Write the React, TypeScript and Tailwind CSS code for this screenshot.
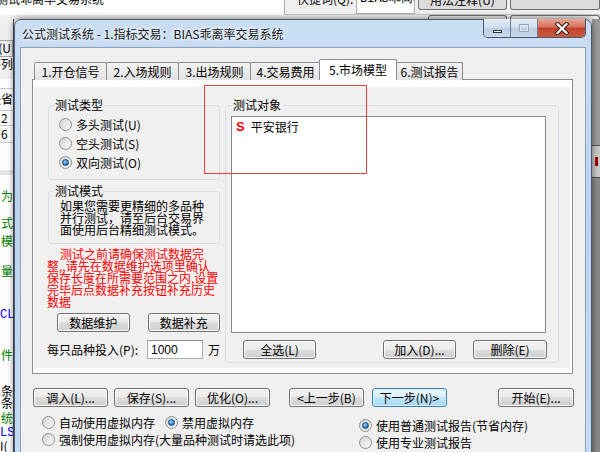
import clsx from 'clsx';

const Btn = ({ label, className, primary }: { label: string; className?: string; primary?: boolean }) => (
  <div
    className={clsx(
      'flex h-[19px] items-center justify-center rounded-[3px] border text-[12px] leading-none text-black whitespace-nowrap',
      primary
        ? 'border-[#3c7fb1] bg-[linear-gradient(#eaf6fd_0%,#d9f0fc_50%,#bee6fd_50%,#a7d9f5_100%)] shadow-[inset_0_0_0_1px_#d8eefc]'
        : 'border-[#707070] bg-[linear-gradient(#f2f2f2_0%,#ebebeb_50%,#dddddd_50%,#cfcfcf_100%)] shadow-[inset_0_0_0_1px_#fcfcfc]',
      className
    )}
  >
    {label}
  </div>
);

const Radio = ({ label, checked, className }: { label: string; checked?: boolean; className?: string }) => (
  <div className={clsx('flex h-[17px] items-center gap-[4px] text-[12px] whitespace-nowrap', className)}>
    <span className="flex h-[13px] w-[13px] shrink-0 items-center justify-center rounded-full border border-[#8e8f8f] bg-[linear-gradient(135deg,#d6d6d6,#f8f8f8)]">
      {checked && (
        <span className="h-[7px] w-[7px] rounded-full border border-[#1c4c7c] bg-[radial-gradient(circle_at_40%_35%,#9fdcff,#2a79c4_60%,#1b4f86)]" />
      )}
    </span>
    <span>{label}</span>
  </div>
);

const Tab = ({ label, className, active }: { label: string; className: string; active?: boolean }) => (
  <div
    className={clsx(
      'flex items-center justify-center rounded-t-[2px] border border-b-0 border-[#898c95] text-[12px] whitespace-nowrap',
      active ? 'relative z-10 h-[21px] bg-white' : 'h-[18px] bg-[linear-gradient(#f3f3f3,#e2e2e2)]',
      className
    )}
  >
    {label}
  </div>
);

const LeftStrip = () => (
  <div className="flex w-[14px] flex-col overflow-hidden text-[12px] leading-[12px] border-r border-[#555]">
    <div className="h-[21px] bg-[#f0f0f0]" />
    <div className="flex h-[17px] items-center justify-end border border-l-0 border-[#a0a0a0] bg-[#ececec] pr-[1px]">(U</div>
    <div className="flex h-[15px] items-center justify-end bg-[#f7f7f7] whitespace-nowrap">序列</div>
    <div className="h-[8px] bg-[#f0f0f0]" />
    <div className="h-[10px] border-b border-[#c8c8c8] bg-white" />
    <div className="flex h-[22px] items-center justify-end border-b border-[#c8c8c8] bg-white whitespace-nowrap">缺省</div>
    <div className="flex h-[15px] items-center justify-start border-b border-[#c8c8c8] bg-white pl-[1px]">2</div>
    <div className="flex h-[18px] items-center justify-start border-b border-[#c8c8c8] bg-white pl-[1px]">6</div>
    <div className="h-[27px] bg-white" />
    <div className="h-[5px] bg-[#e4e4e4]" />
    <div className="flex-1 bg-white">
      <div className="mt-[15px] flex h-[12px] justify-end text-[#008000]">为</div>
      <div className="mt-[15px] flex h-[12px] justify-end text-[#008000]">式</div>
      <div className="mt-[6px] flex h-[12px] justify-end text-[#008000]">模</div>
      <div className="mt-[18px] flex h-[12px] justify-end text-[#008000]">量</div>
      <div className="mt-[32px] flex h-[12px] justify-start font-['Liberation_Mono'] text-[#0000ff]">CL</div>
      <div className="mt-[28px] flex h-[12px] justify-end text-[#008000]">件</div>
      <div className="mt-[24px] flex h-[12px] justify-end">条</div>
      <div className="flex h-[12px] justify-end">条</div>
      <div className="mt-[3px] flex h-[12px] justify-end text-[#008000]">统</div>
      <div className="mt-[3px] flex h-[12px] justify-start font-['Liberation_Mono'] text-[#0000ff]">LS</div>
      <div className="mt-[1px] flex h-[12px] justify-start">I(</div>
    </div>
  </div>
);

const CaptionButtons = () => (
  <div className="-mt-[1px] mr-[5px] flex h-[19px] overflow-hidden rounded-b-[5px] border border-t-0 border-[#48596f]">
    <div className="flex w-[27px] items-end justify-center border-r border-[#6c7e96] bg-[linear-gradient(#e6eef8,#cfdcec_50%,#bccde3_50%,#c9d9ec)] pb-[4px]">
      <span className="h-[3px] w-[9px] border border-[#333] bg-white" />
    </div>
    <div className="flex w-[27px] items-center justify-center border-r border-[#6c7e96] bg-[linear-gradient(#e6eef8,#cfdcec_50%,#bccde3_50%,#c9d9ec)]">
      <span className="h-[8px] w-[10px] border border-[#9aa8ba] shadow-[inset_0_0_0_1px_#dfe6ef]" />
    </div>
    <div className="flex w-[47px] items-center justify-center bg-[linear-gradient(#e9a593,#d4705a_45%,#c0412b_50%,#cd5a40)]">
      <svg width="16" height="13" viewBox="0 0 16 13">
        <path d="M3.5 2 L12.5 11 M12.5 2 L3.5 11" stroke="#3a1c18" strokeWidth="4.2" strokeLinecap="square" />
        <path d="M3.5 2 L12.5 11 M12.5 2 L3.5 11" stroke="#fff" strokeWidth="2.2" strokeLinecap="square" />
      </svg>
    </div>
  </div>
);

const App = () => {
  return (
    <div className="relative h-[452px] w-[600px] overflow-hidden bg-[#f0f0f0] font-['Noto_Sans_CJK_SC',sans-serif] text-black">
      {/* background application */}
      <div className="flex h-[19px] flex-col">
        <div className="flex h-[15px] border-b border-[#c8c8c8] text-[12px]">
          <div className="h-[15px] w-[285px] overflow-hidden border-r border-[#abadb3] bg-white">
            <div className="-ml-[4px] -mt-[10px] whitespace-nowrap">测试乖离率交易系统</div>
          </div>
          <div className="ml-[12px] h-[9px] w-[58px] overflow-hidden">
            <div className="-mt-[10px] whitespace-nowrap">快捷词(Q):</div>
          </div>
          <div className="ml-[1px] h-[14px] w-[59px] overflow-hidden border border-t-0 border-[#abadb3] bg-white">
            <div className="-mt-[10px] pl-[3px] font-['Liberation_Mono'] whitespace-nowrap">BIAS乖离率</div>
          </div>
          <div className="ml-[3px] h-[10px] w-[89px] overflow-hidden rounded-b-[3px] border border-t-0 border-[#707070] bg-[#dcdcdc]">
            <div className="-mt-[9px] text-center whitespace-nowrap">用法注释(U)</div>
          </div>
          <div className="ml-[3px] h-[10px] flex-1 rounded-b-[3px] border border-t-0 border-[#707070] bg-[#dcdcdc]" />
        </div>
        <div className="flex h-[4px]">
          <div className="ml-[428px] w-[79px] rounded-t-[3px] border border-b-0 border-[#707070] bg-[#e6e6e6]" />
          <div className="ml-[3px] flex-1 rounded-t-[3px] border border-b-0 border-[#707070] bg-[#e6e6e6]" />
        </div>
      </div>
      <div className="flex h-[433px]">
        <LeftStrip />
        <div className="flex-1" />
        <div className="flex w-[8px] flex-col">
          <div className="h-[126px] bg-[#9c9c9c]" />
          <div className="flex h-[33px] items-center border-y border-[#555] bg-[#c9c9c9] pl-[3px]">
            <span className="h-[9px] w-[3px] bg-[#a00000]" />
          </div>
          <div className="flex-1 bg-[#8a8a8a]" />
        </div>
      </div>

      {/* dialog window */}
      <div className="absolute left-[14px] top-[19px] flex h-[440px] w-[578px] flex-col rounded-t-[7px] border border-[#4a5a70] bg-[linear-gradient(180deg,#c9ddf3,#bcd4ee_40%,#c4daf2)] shadow-[0_0_7px_rgba(0,0,0,0.55)]">
        <div className="flex h-[27px] shrink-0">
          <div className="ml-[7px] self-center text-[12px] whitespace-nowrap text-[#151515] [text-shadow:0_0_6px_#fff,0_0_4px_#fff]">
            公式测试系统 - 1.指标交易：BIAS乖离率交易系统
          </div>
          <div className="flex-1" />
          <CaptionButtons />
        </div>

        <div className="mx-[5px] flex-1 border border-[#8aa0bb] bg-[#f0f0f0]">
          {/* tab control */}
          <div className="ml-[11px] mt-[11px] w-[541px]">
            <div className="flex h-[21px] items-end pl-[2px]">
              <Tab label="1.开仓信号" className="w-[73px]" />
              <Tab label="2.入场规则" className="-ml-px w-[73px]" />
              <Tab label="3.出场规则" className="-ml-px w-[73px]" />
              <Tab label="4.交易费用" className="-ml-px w-[71px]" />
              <Tab label="5.市场模型" className="-ml-[2px] w-[78px]" active />
              <Tab label="6.测试报告" className="-ml-px w-[67px]" />
            </div>
            <div className="-mt-px h-[295px] border border-[#898c95] bg-white pl-[1px] pr-[2px] pt-[7px]">
              <div className="flex h-[281px] bg-[#f0f0f0] pl-[13px] pt-[10px] text-[12px]">
                {/* left column */}
                <div className="flex w-[173px] flex-col">
                  <fieldset className="ml-[1px] h-[83px] w-[172px] rounded-[3px] border border-[#d5dfe5]">
                    <legend className="ml-[5px] px-[1px] text-[12px] leading-[16px]">测试类型</legend>
                    <div className="flex flex-col pl-[10px] pt-[2px]">
                      <Radio label="多头测试(U)" className="h-[19px]" />
                      <Radio label="空头测试(S)" className="h-[19px]" />
                      <Radio label="双向测试(O)" className="h-[19px]" checked />
                    </div>
                  </fieldset>
                  <fieldset className="ml-[1px] mt-[3px] h-[61px] w-[172px] rounded-[3px] border border-[#d5dfe5]">
                    <legend className="ml-[5px] px-[1px] text-[12px] leading-[16px]">测试模式</legend>
                    <div className="pl-[11px] pt-[1px] leading-[12px] whitespace-nowrap">
                      <div>如果您需要更精细的多品种</div>
                      <div>并行测试，请至后台交易界</div>
                      <div>面使用后台精细测试模式。</div>
                    </div>
                  </fieldset>
                  <div className="mt-[4px] leading-[12px] whitespace-nowrap text-[#ff0000]">
                    <div className="pl-[13px]">测试之前请确保测试数据完</div>
                    <div>整,,请先在数据维护选项里确认</div>
                    <div>保存长度在所需要范围之内,设置</div>
                    <div>完毕后点数据补充按钮补充历史</div>
                    <div>数据</div>
                  </div>
                  <div className="mt-[5px] flex gap-[18px] pl-[10px]">
                    <Btn label="数据维护" className="w-[73px]" />
                    <Btn label="数据补充" className="w-[73px]" />
                  </div>
                  <div className="mt-[8px] flex h-[19px] items-center">
                    <div className="w-[102px] whitespace-nowrap">每只品种投入(P):</div>
                    <div className="flex h-[19px] w-[57px] items-center border border-[#abadb3] border-t-[#8e8f8f] bg-white pl-[3px] font-['Liberation_Sans'] text-[12px]">
                      1000
                    </div>
                    <div className="ml-[5px]">万</div>
                  </div>
                </div>

                {/* right column */}
                <fieldset className="ml-[5px] h-[266px] w-[334px] rounded-[3px] border border-[#d5dfe5]">
                  <legend className="ml-[6px] px-[1px] text-[12px] leading-[16px]">测试对象</legend>
                  <div className="ml-[5px] mt-[3px] h-[217px] w-[315px] border border-[#828790] bg-white">
                    <div className="flex h-[18px] items-center gap-[6px] pl-[4px] pt-[2px]">
                      <span className="font-['Liberation_Sans'] text-[13px] font-bold text-[#ff0000]">S</span>
                      <span>平安银行</span>
                    </div>
                  </div>
                  <div className="mt-[7px] flex justify-between pl-[17px] pr-[11px]">
                    <Btn label="全选(L)" className="w-[73px]" />
                    <div className="flex gap-[17px]">
                      <Btn label="加入(D)..." className="w-[73px]" />
                      <Btn label="删除(E)" className="w-[74px]" />
                    </div>
                  </div>
                </fieldset>
              </div>
            </div>
          </div>

          {/* bottom buttons */}
          <div className="mt-[14px] flex pl-[12px]">
            <Btn label="调入(L)..." className="w-[75px]" />
            <Btn label="保存(S)..." className="ml-[6px] w-[75px]" />
            <Btn label="优化(O)..." className="ml-[6px] w-[75px]" />
            <Btn label="<上一步(B)" className="ml-[19px] w-[75px]" />
            <Btn label="下一步(N)>" className="ml-[8px] w-[75px]" primary />
            <Btn label="开始(E)..." className="ml-[51px] w-[76px]" />
          </div>

          {/* memory options */}
          <div className="mt-[7px] flex">
            <div className="flex w-[338px] flex-col pl-[21px]">
              <div className="flex">
                <Radio label="自动使用虚拟内存" className="w-[123px]" />
                <Radio label="禁用虚拟内存" checked />
              </div>
              <Radio label="强制使用虚拟内存(大量品种测试时请选此项)" />
            </div>
            <div className="mt-[3px] flex flex-col">
              <Radio label="使用普通测试报告(节省内存)" checked />
              <Radio label="使用专业测试报告" />
            </div>
          </div>
        </div>
      </div>

      {/* red annotation box */}
      <div className="absolute left-[204px] top-[85px] h-[89px] w-[163px] border-[1.5px] border-[#f03c3c]" />
    </div>
  );
};

export default App;
